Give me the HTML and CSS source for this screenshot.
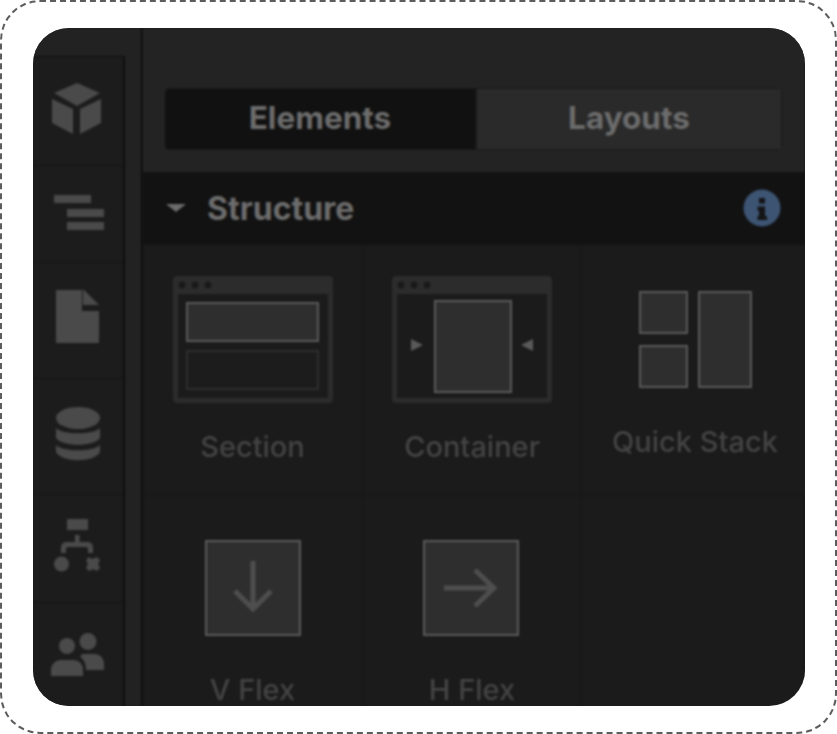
FILE: index.html
```html
<!DOCTYPE html>
<html lang="en">
<head>
    <meta charset="UTF-8">
    <meta name="viewport" content="width=device-width, initial-scale=1.0">
    <title>Add Elements Panel</title>
    <link rel="stylesheet" href="styles.css">
</head>
<body>

    <div class="frame">
        <div class="panel">

            <div class="side">
                <div class="rail">
                    <div class="rail-item rail-cube">
                        <svg width="50" height="52" viewBox="0 0 50 52"><path d="M25 0L48 10L25 23L2 10ZM0 16L21 26V51L0 40ZM28 26L49 16V40L28 51Z"/></svg>
                    </div>
                    <div class="rail-item rail-tree">
                        <svg width="50" height="35" viewBox="0 0 50 35"><path d="M0 0H37V8H0ZM13 14H50V22H13ZM13 27H50V35H13Z"/></svg>
                    </div>
                    <div class="rail-item rail-page">
                        <svg width="44" height="54" viewBox="0 0 44 54"><path d="M0 1H26V22H43V54H0ZM27 0L43 16H27Z"/></svg>
                    </div>
                    <div class="rail-item rail-data">
                        <svg width="44" height="54" viewBox="0 0 44 54"><ellipse cx="22" cy="11" rx="22" ry="11"/><path d="M0 21C6 28 38 28 44 21V31C38 40 6 40 0 31ZM0 38C6 45 38 45 44 38V45C38 56 6 56 0 45Z"/></svg>
                    </div>
                    <div class="rail-item rail-logic">
                        <svg width="46" height="54" viewBox="0 0 46 54"><path d="M13 0H34V11H13ZM21 16H25.500V23H33C37 23 39 25 39 29V34H34V30C34 29 33 28 32 28H14C13 28 12 29 12 30V34H7V29C7 25 9 23 13 23H21Z"/><circle cx="7.500" cy="45" r="7.500"/><path d="M38 40L43 38L46 41L44 45L46 49L43 52L39 50L35 52L32 49L34 45L32 41L35 38Z"/></svg>
                    </div>
                    <div class="rail-item rail-users">
                        <svg width="54" height="44" viewBox="0 0 54 44"><circle cx="16" cy="13" r="8"/><circle cx="37" cy="8.500" r="8.500"/><path d="M0 43V37C0 31 5 27 10 27H22C28 27 32 31 32 37V43ZM31 21H43C49 21 53 25 53 31V37H35C35 31 33 26 29 24Z"/></svg>
                    </div>
                </div>
                <div class="gutter"></div>
            </div>

            <div class="main">
                <div class="head">
                    <div class="tabs">
                        <div class="tab tab-active">Elements</div>
                        <div class="tab">Layouts</div>
                    </div>
                </div>

                <div class="section-bar">
                    <span class="caret"></span>
                    <span class="section-title">Structure</span>
                    <svg class="info" width="38" height="38" viewBox="0 0 38 38"><circle cx="19" cy="19" r="18.500" fill="#3d5473"/><path fill="#141414" d="M16 9H22V14.500H16ZM14.500 17.500H22V27H24V31H14.500V27H16V21.500H14.500Z"/></svg>
                </div>

                <div class="grid">
                    <div class="cell">
                        <svg class="thumb" width="160" height="127" viewBox="0 0 160 127">
                            <rect width="160" height="127" rx="4" fill="#2c2c2c"/>
                            <rect x="5" y="18" width="150" height="104" fill="#1b1b1b"/>
                            <circle cx="9" cy="9" r="3.500" fill="#191919"/><circle cx="22" cy="9" r="3.500" fill="#191919"/><circle cx="35" cy="9" r="3.500" fill="#191919"/>
                            <rect x="14" y="27" width="131" height="38" fill="#2e2e2e" stroke="#5a5a5a" stroke-width="2"/>
                            <rect x="14" y="75" width="131" height="38" fill="#1c1c1c" stroke="#2e2e2e" stroke-width="2"/>
                        </svg>
                        <span class="cell-label">Section</span>
                    </div>
                    <div class="cell">
                        <svg class="thumb" width="160" height="127" viewBox="0 0 160 127">
                            <rect width="160" height="127" rx="4" fill="#2c2c2c"/>
                            <rect x="5" y="18" width="150" height="104" fill="#1b1b1b"/>
                            <circle cx="9" cy="9" r="3.500" fill="#191919"/><circle cx="22" cy="9" r="3.500" fill="#191919"/><circle cx="35" cy="9" r="3.500" fill="#191919"/>
                            <rect x="43" y="25" width="76" height="91" fill="#2e2e2e" stroke="#5a5a5a" stroke-width="2"/>
                            <path fill="#5a5a5a" d="M19 63L31 69L19 75ZM141 63L129 69L141 75Z"/>
                        </svg>
                        <span class="cell-label">Container</span>
                    </div>
                    <div class="cell cell-stack">
                        <svg class="thumb thumb-stack" width="114" height="97" viewBox="0 0 114 97">
                            <rect x="1" y="1" width="47" height="41" fill="#2e2e2e" stroke="#5a5a5a" stroke-width="2"/>
                            <rect x="1" y="55" width="47" height="41" fill="#2e2e2e" stroke="#5a5a5a" stroke-width="2"/>
                            <rect x="60" y="1" width="52" height="95" fill="#2e2e2e" stroke="#5a5a5a" stroke-width="2"/>
                        </svg>
                        <span class="cell-label">Quick Stack</span>
                    </div>
                    <div class="cell cell-flex">
                        <svg class="thumb" width="96" height="96" viewBox="0 0 96 96">
                            <rect x="1" y="1" width="94" height="94" fill="#2e2e2e" stroke="#5a5a5a" stroke-width="2"/>
                            <path fill="none" stroke="#4e4e4e" stroke-width="5" d="M48 21V69M30 51L48 69L66 51"/>
                        </svg>
                        <span class="cell-label">V Flex</span>
                    </div>
                    <div class="cell cell-flex">
                        <svg class="thumb thumb-hflex" width="96" height="96" viewBox="0 0 96 96">
                            <rect x="1" y="1" width="94" height="94" fill="#2e2e2e" stroke="#5a5a5a" stroke-width="2"/>
                            <path fill="none" stroke="#4e4e4e" stroke-width="5" d="M21 48H71M52 30L71 48L52 66"/>
                        </svg>
                        <span class="cell-label">H Flex</span>
                    </div>
                    <div class="cell cell-flex"></div>
                </div>
            </div>

        </div>
    </div>

</body>
</html>
```

FILE: styles.css
```css
body {
    margin: 0;
    background-color: #fff;
    font-family: 'Inter', 'Liberation Sans', sans-serif;
}

.frame {
    box-sizing: border-box;
    width: 837px;
    height: 734px;
    padding: 26px 30px 26px 31px;
    border: 2px dashed #5c5c5c;
    border-radius: 40px;
}

.panel {
    display: flex;
    height: 678px;
    overflow: hidden;
    border-radius: 36px;
    background-color: #1b1b1b;
}

.side {
    display: flex;
    flex: 0 0 110px;
    background-color: #222;
    filter: blur(0.8px);
}

.rail {
    display: flex;
    flex-direction: column;
    flex: 0 0 90px;
    margin-top: 28px;
    border-top: 1px solid #0f0f0f;
    border-right: 2px solid #0e0e0e;
    background-color: #1c1c1c;
}

.rail-item {
    display: flex;
    align-items: center;
    justify-content: center;
    box-sizing: border-box;
    padding-right: 1px;
    border-bottom: 1px solid #151515;
}

.rail-item svg {
    fill: #4a4a4a;
}

.rail-cube { height: 109px; padding: 0 3px 4px 0; }
.rail-tree { height: 97px; padding: 0 0 4px 1px; }
.rail-page { height: 116px; padding-bottom: 9px; }
.rail-data { height: 116px; padding-bottom: 5px; }
.rail-logic { height: 108px; padding: 0 3px 5px 0; }
.rail-users { flex: 1; border-bottom: none; }

.gutter {
    flex: 1;
    border-right: 2px solid #0e0e0e;
}

.main {
    display: flex;
    flex-direction: column;
    flex: 1;
    min-width: 0;
    filter: blur(0.8px);
}

.head {
    height: 144px;
    box-sizing: border-box;
    padding: 60px 23px 22px 22px;
    background-color: #232323;
}

.tabs {
    display: flex;
    box-sizing: border-box;
    height: 62px;
    padding: 1px 1px 1px 0;
    gap: 2px;
    background-color: #191919;
    border-radius: 5px;
    overflow: hidden;
}

.tab {
    display: flex;
    flex: 1;
    align-items: center;
    justify-content: center;
    padding-bottom: 3px;
    background-color: #2a2a2a;
    color: #6c6c6c;
    font-size: 31.5px;
    font-weight: 700;
}

.tab-active {
    flex: 0 0 310px;
    background-color: #111;
}

.section-bar {
    display: flex;
    align-items: center;
    height: 74px;
    padding: 0 24px 0 23px;
    background-color: #121212;
    border-bottom: 1px solid #141414;
}

.caret {
    width: 0;
    height: 0;
    margin-right: 21px;
    border-top: 8px solid #6c6c6c;
    border-left: 10px solid transparent;
    border-right: 10px solid transparent;
}

.section-title {
    flex: 1;
    color: #6c6c6c;
    font-size: 32px;
    font-weight: 700;
}

.grid {
    display: grid;
    flex: 1;
    grid-template-columns: 221px 218px 1fr;
    grid-template-rows: 251px 1fr;
}

.cell {
    display: flex;
    flex-direction: column;
    align-items: center;
    overflow: hidden;
    box-sizing: border-box;
    padding-top: 31px;
    border-right: 2px solid #181818;
    border-bottom: 2px solid #181818;
}

.cell-stack {
    padding: 46px 0 0 3px;
    border-right: none;
}

.cell-flex {
    padding-top: 44px;
    border-bottom: none;
}

.thumb {
    flex: none;
}

.thumb-stack {
    margin-left: 2px;
}

.thumb-hflex {
    margin-right: 2px;
}

.cell-label {
    margin-top: 27px;
    color: #444;
    font-size: 29px;
    font-weight: 500;
    line-height: 33px;
}

.cell-stack .cell-label {
    margin-top: 37px;
}

.cell-flex .cell-label {
    margin-top: 37px;
}
```
